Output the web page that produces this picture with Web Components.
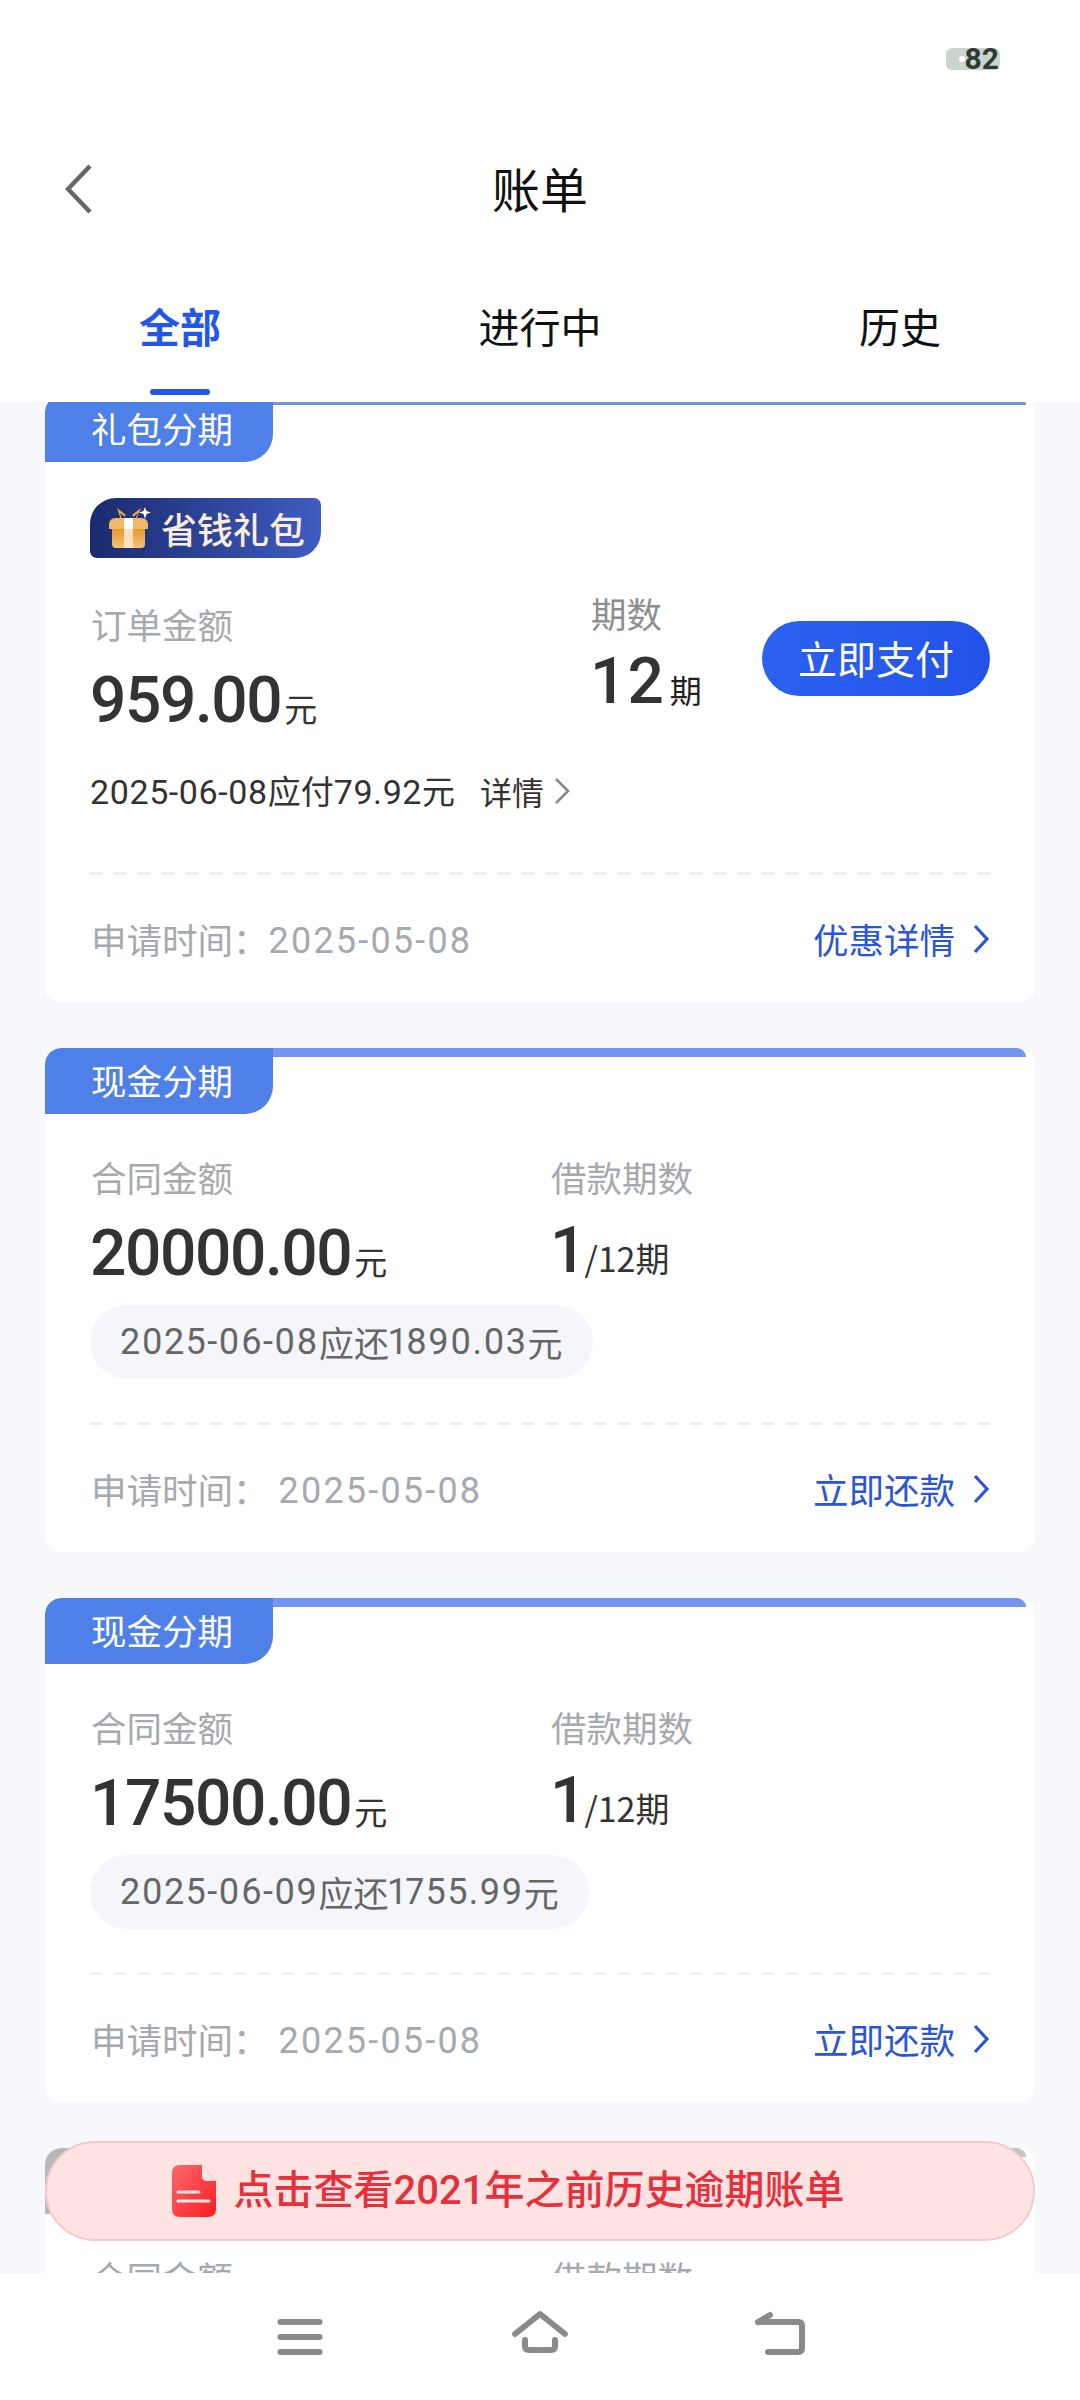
<!DOCTYPE html>
<html lang="zh"><head><meta charset="utf-8"><title>账单</title>
<style>
html,body{margin:0;padding:0;background:#f6f8fc}
body{width:1080px;height:2400px;overflow:hidden;font-family:Roboto,"Noto Sans CJK SC",sans-serif}
bill-app{display:flex}
</style></head><body>
<template id="t-app"><style>
:host{display:flex;flex-direction:column;width:1080px;height:2400px;position:relative;overflow:hidden;background:#f6f8fc}
.list{flex:1;min-height:0;overflow:hidden;display:flex;flex-direction:column;gap:46px;padding:0 45px}
::slotted(bill-card:first-of-type){margin-top:-6px}
</style><slot name="header"></slot><div class="list"><slot></slot></div><slot name="banner"></slot><slot name="nav"></slot></template>

<template id="t-header"><style>
:host{display:block;background:#fff;height:402px;position:relative;z-index:2;flex:none}
.status{height:22px;padding:48px 80px 0 0;display:flex;justify-content:flex-end}
.bat{width:54px;height:22px;border-radius:6px;background:#c9d6cd;position:relative;display:flex;align-items:center;justify-content:flex-end;padding-right:1px;box-sizing:border-box;font:700 30px/22px Roboto,sans-serif;color:#2f3a34}
.bat i{position:absolute;left:13px;top:8px;width:6px;height:6px;border-radius:50%;background:#fff}
.title{margin-top:87px;height:60px;display:grid;grid-template-columns:1fr auto 1fr;align-items:center;padding-left:65px;padding-right:65px}
.title svg{display:block;position:relative;top:2px}
h1{margin:0;font:400 48px/60px "Noto Sans CJK SC",sans-serif;color:#111}
.tabs{margin-top:80px;display:grid;grid-template-columns:repeat(3,360px)}
</style><div class="status"><div class="bat"><i></i>82</div></div>
<div class="title"><svg width="28" height="52" viewBox="0 0 28 52"><path d="M25 3 3 26l22 23" fill="none" stroke="#666" stroke-width="4.5"/></svg><h1>账单</h1><span></span></div>
<div class="tabs"><slot></slot></div></template>

<template id="t-tab"><style>
:host{display:flex;flex-direction:column;align-items:center;font:400 41px/56px "Noto Sans CJK SC",sans-serif;color:#111}
:host([active]){color:#2456e8;font-weight:700}
i{display:block;width:60px;height:6px;border-radius:3px;margin-top:36px;background:transparent}
:host([active]) i{background:#2456e8}
</style><slot></slot><i></i></template>

<template id="t-card"><style>
:host{display:block;flex:none;background:#fff;border-radius:16px;overflow:hidden;font-family:Roboto,"Noto Sans CJK SC",sans-serif}
.top{display:flex;align-items:flex-start;height:66px}
.tag{width:228px;height:66px;box-sizing:border-box;padding-left:46px;background:var(--tag,#4f80e8);border-radius:16px 0 28px 0;color:#fff;font:400 35.5px/64px "Noto Sans CJK SC",sans-serif;flex:none}
.bar{flex:1;height:9px;margin-right:9px;border-radius:0 10px 0 0;background:var(--bar,#7494f2)}
.body{padding:0 45px 41px 45px}
.dash{height:3px;background:repeating-linear-gradient(90deg,#eeeff2 0 12px,transparent 12px 24px)}
.foot{display:flex;justify-content:space-between;align-items:center;height:44px;margin-top:42px}
</style><div class="top"><div class="tag"><slot name="tag"></slot></div><div class="bar"></div></div>
<div class="body"><slot></slot><div class="dash" part="dash"></div><div class="foot"><slot name="foot"></slot></div></div></template>

<template id="t-label"><style>
:host{display:block;padding-left:1px;font:400 35.5px/44px "Noto Sans CJK SC",sans-serif;color:#a6a9ae}
:host([dark]){color:#8e8e8e}
</style><slot></slot></template>

<template id="t-amount"><style>
:host{display:block;height:64px;white-space:nowrap;font:500 64px/64px Roboto,sans-serif;letter-spacing:-1.4px;color:#333}
::slotted(small){font:400 33px/33px "Noto Sans CJK SC",sans-serif;letter-spacing:0;color:#333;margin-left:3px}
</style><slot></slot></template>

<template id="t-pill"><style>
:host{display:inline-flex;align-items:center;height:74px;padding:0 30px;border-radius:37px;background:#f5f6fb;color:#666;font:400 36px/74px Roboto,"Noto Sans CJK SC",sans-serif;font-feature-settings:"pnum";letter-spacing:1.4px;white-space:nowrap}
::slotted(b){font:400 35px/74px "Noto Sans CJK SC",sans-serif;letter-spacing:0}
</style><slot></slot></template>

<template id="t-badge"><style>
:host{display:flex;align-items:center;width:231px;height:60px;box-sizing:border-box;padding-left:19px;gap:10px;background:linear-gradient(90deg,#1b2a6e,#3f5cc2);border-radius:26px 7px 26px 7px;color:#f9eddc;font:500 36px/58px "Noto Sans CJK SC",sans-serif}
svg{flex:none;display:block}
</style><svg width="42" height="42" viewBox="0 0 42 42"><defs><linearGradient id="g" x1="0" y1="0" x2="0" y2="1"><stop offset="0" stop-color="#e49a2f"/><stop offset="1" stop-color="#f3c27a"/></linearGradient></defs>
<path d="M12 13 8 1l9 7zM27 13l5-12-9 7z" fill="#e8a74a"/><path d="M13 12 11 6l6 5zM26 12l3-6-6 5z" fill="#1b2a6e"/>
<path d="M0 18Q0 11 7 11H32Q39 11 39 18V22H0Z" fill="#efb868"/><path d="M3 22H36V37Q36 41 32 41H7Q3 41 3 37Z" fill="url(#g)"/>
<rect x="15" y="11" width="9" height="11" fill="#fff"/><rect x="15" y="22" width="9" height="19" fill="#fbe2bb"/>
<path d="M36 0 37.5 4 42 5.5 37.5 7 36 12 34.5 7 30 5.5 34.5 4Z" fill="#fff"/></svg><slot></slot></template>

<template id="t-pay"><style>
:host{display:block;width:228px;height:75px;border-radius:38px;background:linear-gradient(90deg,#2a62f0,#2352ea);color:#fff;text-align:center;font:400 39px/73px "Noto Sans CJK SC",sans-serif}
</style><slot></slot></template>

<template id="t-link"><style>
:host{display:flex;align-items:center;gap:17px;color:#2a55d8;font:400 35.5px/44px "Noto Sans CJK SC",sans-serif}
svg{display:block}
</style><slot></slot><svg width="18" height="30" viewBox="0 0 18 30"><path d="M3 2l12 13L3 28" fill="none" stroke="#2a55d8" stroke-width="3.2"/></svg></template>

<template id="t-date"><style>
:host{display:flex;align-items:center;padding-left:1px;font:400 35.5px/44px "Noto Sans CJK SC",sans-serif;color:#a6a9ae;white-space:nowrap}
span{font:400 36px/44px Roboto,sans-serif;letter-spacing:2.2px;margin-left:var(--gap,0);padding-top:3px}
:host([wide]) span{--gap:10px}
</style><slot name="l"></slot><span><slot></slot></span></template>

<template id="t-banner"><style>
:host{position:absolute;left:45px;top:2141px;width:990px;height:100px;box-sizing:border-box;border:2px solid #f4c9cb;border-radius:50px;background:#fee3e3;display:flex;align-items:center;justify-content:center;padding-right:64px;gap:18px;color:#e6303c;font:500 40px/96px Roboto,"Noto Sans CJK SC",sans-serif;z-index:3}
svg{display:block;flex:none}
</style><svg width="44" height="52" viewBox="0 0 44 52"><defs><linearGradient id="r" x1="0" y1="0" x2="1" y2="1"><stop offset="0" stop-color="#f96a6d"/><stop offset="1" stop-color="#fb1c22"/></linearGradient></defs>
<path d="M8 0H30L44 16V44Q44 52 36 52H8Q0 52 0 44V8Q0 0 8 0Z" fill="url(#r)"/><path d="M30 0 44 16H35Q30 16 30 11Z" fill="#fde4e4"/>
<path d="M6 27H27M6 36H37" stroke="#fde4e4" stroke-width="3" stroke-linecap="round"/></svg><span><slot></slot></span></template>

<template id="t-nav"><style>
:host{display:flex;justify-content:center;flex:none;height:127px;background:#fff;padding-top:32px;box-sizing:border-box;position:relative;z-index:2}
div{width:240px;display:flex;justify-content:center}
svg{display:block}
path{fill:none;stroke:#8a8a8a;stroke-width:6;stroke-linecap:round;stroke-linejoin:round}
</style>
<div><svg width="60" height="60" viewBox="0 0 60 60"><path d="M10.5 17H49.5M10.5 32H49.5M10.5 47H49.5"/></svg></div>
<div><svg width="60" height="60" viewBox="0 0 60 60"><path d="M5 29 30 9 55 29"/><path d="M15 35V41Q15 45 19 45H41Q45 45 45 41V35" /></svg></div>
<div><svg width="60" height="60" viewBox="0 0 60 60"><path d="M8 17H48Q52 17 52 21V43Q52 47 48 47H18M8 17 20 10"/></svg></div></template>

<bill-app>
<bill-header slot="header"><bill-tab active>全部</bill-tab><bill-tab>进行中</bill-tab><bill-tab>历史</bill-tab></bill-header>

<bill-card style="--bar:#7b90de">
  <span slot="tag">礼包分期</span>
  <bill-badge style="margin-top:36px">省钱礼包</bill-badge>
  <bill-row style="margin-top:33px;height:142px">
    <div style="width:500px;padding-top:11px"><bill-label>订单金额</bill-label><bill-amount style="margin-top:23px">959.00<small>元</small></bill-amount></div>
    <div style="width:172px"><bill-label dark>期数</bill-label><bill-amount style="margin-top:15px;letter-spacing:1px">12<small style="color:#222;font-size:32px;margin-left:5px">期</small></bill-amount></div>
    <bill-pay style="margin-top:30px">立即支付</bill-pay>
  </bill-row>
  <bill-row style="margin-top:36px;height:44px;margin-bottom:59px;align-items:center;color:#333;font:400 34px/44px Roboto,'Noto Sans CJK SC',sans-serif;letter-spacing:.6px">
    <span style="white-space:nowrap">2025-06-08<b style="font:400 33px/44px 'Noto Sans CJK SC',sans-serif;letter-spacing:0">应付</b>79.92<b style="font:400 33px/44px 'Noto Sans CJK SC',sans-serif;letter-spacing:0">元</b></span>
    <span style="margin-left:25px;font:400 32px/44px 'Noto Sans CJK SC',sans-serif;letter-spacing:0">详情</span>
    <svg style="margin-left:9px" width="18" height="28" viewBox="0 0 18 28"><path d="M3 2l12 12L3 26" fill="none" stroke="#888" stroke-width="2.6"/></svg>
  </bill-row>
  <bill-date slot="foot"><span slot="l">申请时间：</span>2025-05-08</bill-date>
  <bill-link slot="foot">优惠详情</bill-link>
</bill-card>

<bill-card>
  <span slot="tag">现金分期</span>
  <bill-row style="margin-top:41px">
    <div style="width:460px"><bill-label>合同金额</bill-label><bill-amount style="margin-top:23px">20000.00<small>元</small></bill-amount></div>
    <div><bill-label>借款期数</bill-label><bill-amount style="margin-top:20px;letter-spacing:0">1<small style="font-size:34px;margin-left:-2px">/12期</small></bill-amount></div>
  </bill-row>
  <bill-pill style="margin:19px 0 43px">2025-06-08<b>应还</b>1890.03<b>元</b></bill-pill>
  <bill-date slot="foot" wide><span slot="l">申请时间：</span>2025-05-08</bill-date>
  <bill-link slot="foot">立即还款</bill-link>
</bill-card>

<bill-card>
  <span slot="tag">现金分期</span>
  <bill-row style="margin-top:41px">
    <div style="width:460px"><bill-label>合同金额</bill-label><bill-amount style="margin-top:23px">17500.00<small>元</small></bill-amount></div>
    <div><bill-label>借款期数</bill-label><bill-amount style="margin-top:20px;letter-spacing:0">1<small style="font-size:34px;margin-left:-2px">/12期</small></bill-amount></div>
  </bill-row>
  <bill-pill style="margin:19px 0 43px">2025-06-09<b>应还</b>1755.99<b>元</b></bill-pill>
  <bill-date slot="foot" wide><span slot="l">申请时间：</span>2025-05-08</bill-date>
  <bill-link slot="foot">立即还款</bill-link>
</bill-card>

<bill-card style="--tag:#b8b8b8;--bar:#c4c4c4">
  <span slot="tag"></span>
  <bill-row style="margin-top:41px">
    <div style="width:460px"><bill-label>合同金额</bill-label></div>
    <div><bill-label>借款期数</bill-label></div>
  </bill-row>
</bill-card>

<bill-banner slot="banner">点击查看2021年之前历史逾期账单</bill-banner>
<bill-nav slot="nav"></bill-nav>
</bill-app>

<script>
const defs={'bill-app':'t-app','bill-header':'t-header','bill-tab':'t-tab','bill-card':'t-card','bill-label':'t-label','bill-amount':'t-amount','bill-pill':'t-pill','bill-badge':'t-badge','bill-pay':'t-pay','bill-link':'t-link','bill-date':'t-date','bill-banner':'t-banner','bill-nav':'t-nav'};
for(const [name,id] of Object.entries(defs)){
  customElements.define(name,class extends HTMLElement{
    constructor(){super();this.attachShadow({mode:'open'}).appendChild(document.getElementById(id).content.cloneNode(true));}
  });
}
customElements.define('bill-row',class extends HTMLElement{
  constructor(){super();const s=this.attachShadow({mode:'open'});s.innerHTML='<style>:host{display:flex;align-items:flex-start}</style><slot></slot>';}
});
</script>
</body></html>
